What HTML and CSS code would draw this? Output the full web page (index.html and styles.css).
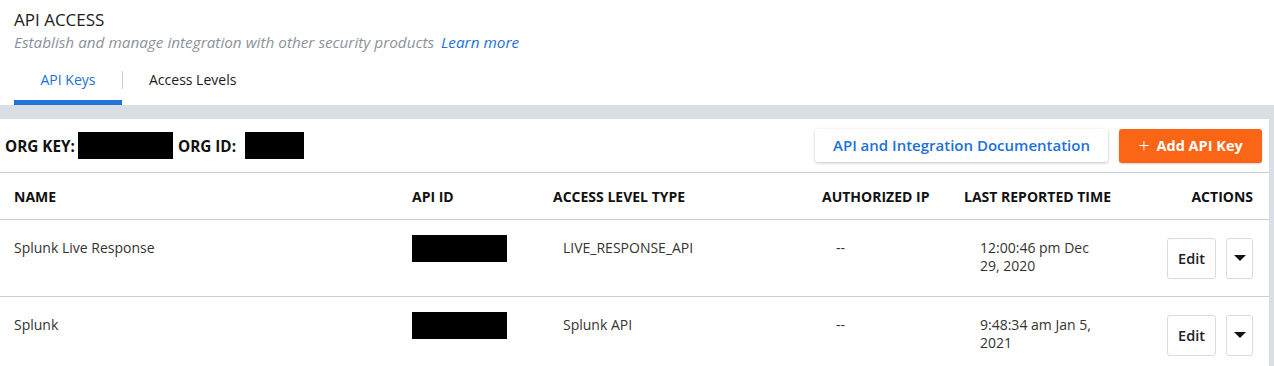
FILE: index.html
```html
<!DOCTYPE html>
<html lang="en">
<head>
    <meta charset="UTF-8">
    <title>API Access</title>
    <link rel="stylesheet" href="styles.css">
</head>
<body>
    <div class="page-header">
        <h1>API ACCESS</h1>
        <p class="subtitle">Establish and manage integration with other security products <a href="#">Learn more</a></p>
        <div class="tabs">
            <div class="tab active">API Keys</div>
            <div class="tab-divider"></div>
            <div class="tab">Access Levels</div>
        </div>
    </div>

    <div class="content">
        <div class="card">
            <div class="toolbar">
                <div class="org-info">
                    <span class="org-label">ORG KEY:</span>
                    <span class="redacted org-key"></span>
                    <span class="org-label">ORG ID:</span>
                    <span class="redacted org-id"></span>
                </div>
                <div class="toolbar-actions">
                    <button class="btn-doc">API and Integration Documentation</button>
                    <button class="btn-add"><span class="plus">+</span> Add API Key</button>
                </div>
            </div>

            <div class="grid head">
                <div class="col-name">NAME</div>
                <div class="col-id">API ID</div>
                <div class="col-level">ACCESS LEVEL TYPE</div>
                <div class="col-ip">AUTHORIZED IP</div>
                <div class="col-time">LAST REPORTED TIME</div>
                <div class="col-actions">ACTIONS</div>
            </div>

            <div class="grid row">
                <div class="col-name">Splunk Live Response</div>
                <div class="col-id"><span class="redacted api-id"></span></div>
                <div class="col-level cell">LIVE_RESPONSE_API</div>
                <div class="col-ip cell">--</div>
                <div class="col-time cell">12:00:46 pm Dec<br>29, 2020</div>
                <div class="col-actions actions">
                    <button class="btn-edit">Edit</button>
                    <button class="btn-menu"><span class="caret"></span></button>
                </div>
            </div>

            <div class="grid row">
                <div class="col-name">Splunk</div>
                <div class="col-id"><span class="redacted api-id"></span></div>
                <div class="col-level cell">Splunk API</div>
                <div class="col-ip cell">--</div>
                <div class="col-time cell">9:48:34 am Jan 5,<br>2021</div>
                <div class="col-actions actions">
                    <button class="btn-edit">Edit</button>
                    <button class="btn-menu"><span class="caret"></span></button>
                </div>
            </div>
        </div>
    </div>
</body>
</html>
```

FILE: styles.css
```css
body {
    margin: 0;
    font-family: "Open Sans", Arial, sans-serif;
    background-color: #ffffff;
    color: #222;
}

.page-header {
    padding: 9px 0 0 14px;
}

h1 {
    margin: 0;
    font-size: 17px;
    font-weight: 400;
    line-height: 21px;
    color: #1b1b1b;
}

.subtitle {
    margin: 1px 0 0 0;
    font-size: 15.3px;
    line-height: 22px;
    font-style: italic;
    color: #8b929b;
}

.subtitle a {
    color: #2170d9;
    text-decoration: none;
    margin-left: 3px;
}

/* Tabs */
.tabs {
    display: flex;
    align-items: center;
    margin-top: 8px;
    height: 44px;
}

.tab {
    font-size: 14px;
    color: #1b1b1b;
    padding: 0 26px;
    height: 44px;
    line-height: 38px;
    box-sizing: border-box;
}

.tab.active {
    color: #2170d9;
    border-bottom: 5px solid #2473db;
    width: 108px;
    padding: 0;
    text-align: center;
}

.tab-divider {
    width: 1px;
    height: 18px;
    margin-top: -6px;
    background-color: #c9cfd6;
}

/* Main content */
.content {
    background-color: #d8dee4;
    padding: 14px 5px 0 0;
}

.card {
    background-color: #ffffff;
}

.toolbar {
    display: flex;
    justify-content: space-between;
    align-items: center;
    height: 53px;
    padding: 0 7px 0 5px;
    border-bottom: 1px solid #c8cfd7;
}

.org-info {
    display: flex;
    align-items: center;
}

.org-label {
    font-size: 15.3px;
    font-weight: 700;
    color: #111;
    margin-right: 3px;
}

.redacted {
    display: inline-block;
    background-color: #000;
    height: 27px;
}

.org-key {
    width: 95px;
    margin-right: 5px;
}

.org-id {
    width: 59px;
    margin-left: 6px;
}

.toolbar-actions {
    display: flex;
    gap: 11px;
}

button {
    font-family: "Open Sans", Arial, sans-serif;
    cursor: pointer;
}

.btn-doc {
    height: 33px;
    width: 293px;
    background-color: #fff;
    color: #2170d9;
    border: none;
    border-radius: 3px;
    box-shadow: 0 1px 3px rgba(0,0,0,0.25);
    font-size: 15px;
    font-weight: 600;
}

.btn-add {
    height: 34px;
    width: 143px;
    background-color: #fa6516;
    color: #fff;
    border: none;
    border-radius: 3px;
    box-shadow: 0 1px 2px rgba(0,0,0,0.2);
    font-size: 14.5px;
    font-weight: 700;
}

.plus {
    font-weight: 300;
    font-size: 20px;
    vertical-align: -2px;
    margin-right: 3px;
}

/* Table */
.grid {
    display: grid;
    grid-template-columns: 398px 141px 269px 142px 1fr 110px;
    padding: 0 16px 0 14px;
    border-bottom: 1px solid #c8cfd7;
    font-size: 14px;
}

.head {
    height: 46px;
    align-items: center;
    font-weight: 700;
    color: #111;
}

.head .col-actions {
    text-align: right;
}

.row {
    height: 76px;
    color: #333;
}

.row > div {
    padding-top: 19px;
    line-height: 18px;
}

.row .col-id {
    padding-top: 15px;
}

.api-id {
    width: 95px;
}

.col-level.cell {
    padding-left: 10px;
}

.col-ip.cell {
    padding-left: 14px;
}

.col-time.cell {
    padding-left: 16px;
}

.row .actions {
    display: flex;
    justify-content: flex-end;
    align-items: center;
    gap: 10px;
    padding-top: 0;
}

.btn-edit {
    width: 49px;
    height: 41px;
    background-color: #fff;
    border: 1px solid #d6dce2;
    border-radius: 3px;
    font-size: 14.5px;
    font-weight: 600;
    color: #222;
    padding: 0;
}

.btn-menu {
    width: 27px;
    height: 41px;
    background-color: #fff;
    border: 1px solid #d6dce2;
    border-radius: 3px;
    padding: 0;
    display: flex;
    align-items: center;
    justify-content: center;
}

.caret {
    width: 0;
    height: 0;
    border-left: 6px solid transparent;
    border-right: 6px solid transparent;
    border-top: 6px solid #111;
}
```
